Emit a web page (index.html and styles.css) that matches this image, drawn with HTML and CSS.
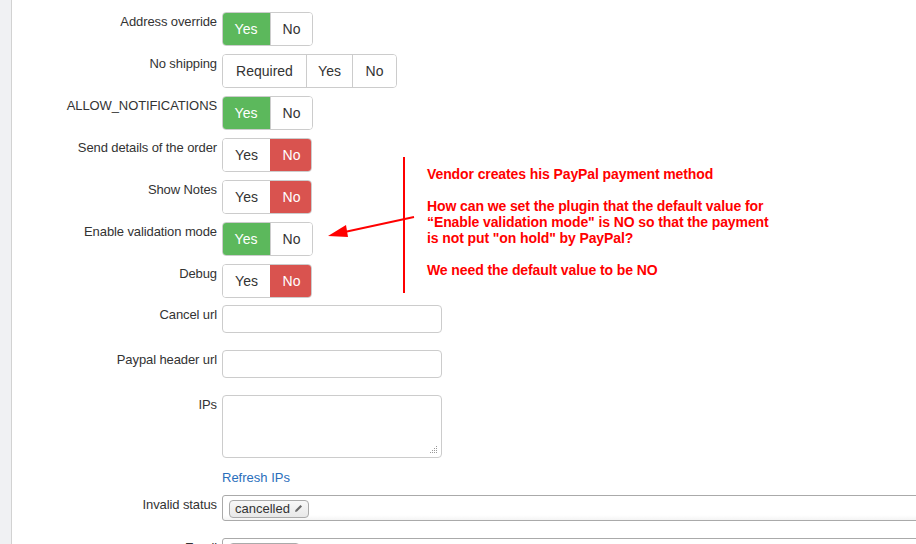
FILE: index.html
```html
<!DOCTYPE html>
<html>
<head>
<meta charset="utf-8">
<link rel="stylesheet" href="styles.css">
</head>
<body>
<div class="page">
  <aside class="side"></aside>
  <main class="main">
    <div class="row toggle-row">
      <label class="lbl">Address override</label>
      <div class="btn-group"><span class="btn yes on-green">Yes</span><span class="btn no">No</span></div>
    </div>
    <div class="row toggle-row">
      <label class="lbl">No shipping</label>
      <div class="btn-group"><span class="btn req">Required</span><span class="btn yes2">Yes</span><span class="btn no2">No</span></div>
    </div>
    <div class="row toggle-row">
      <label class="lbl">ALLOW_NOTIFICATIONS</label>
      <div class="btn-group"><span class="btn yes on-green">Yes</span><span class="btn no">No</span></div>
    </div>
    <div class="row toggle-row">
      <label class="lbl">Send details of the order</label>
      <div class="btn-group"><span class="btn yes">Yes</span><span class="btn no on-red">No</span></div>
    </div>
    <div class="row toggle-row">
      <label class="lbl">Show Notes</label>
      <div class="btn-group"><span class="btn yes">Yes</span><span class="btn no on-red">No</span></div>
    </div>
    <div class="row toggle-row">
      <label class="lbl">Enable validation mode</label>
      <div class="btn-group"><span class="btn yes on-green">Yes</span><span class="btn no">No</span></div>
    </div>
    <div class="row toggle-row last-toggle">
      <label class="lbl">Debug</label>
      <div class="btn-group"><span class="btn yes">Yes</span><span class="btn no on-red">No</span></div>
    </div>
    <div class="row input-row">
      <label class="lbl">Cancel url</label>
      <div class="input"></div>
    </div>
    <div class="row input-row">
      <label class="lbl">Paypal header url</label>
      <div class="input"></div>
    </div>
    <div class="row area-row">
      <label class="lbl">IPs</label>
      <div class="ctrl">
        <div class="textarea">
          <svg class="grip" width="8" height="8" viewBox="0 0 8 8"><g fill="#999"><rect x="6" y="0" width="1" height="1"/><rect x="4" y="2" width="1" height="1"/><rect x="6" y="2" width="1" height="1"/><rect x="2" y="4" width="1" height="1"/><rect x="4" y="4" width="1" height="1"/><rect x="6" y="4" width="1" height="1"/><rect x="0" y="6" width="1" height="1"/><rect x="2" y="6" width="1" height="1"/><rect x="4" y="6" width="1" height="1"/><rect x="6" y="6" width="1" height="1"/></g></svg>
        </div>
        <a class="link">Refresh IPs</a>
      </div>
    </div>
    <div class="row chosen-row">
      <label class="lbl">Invalid status</label>
      <div class="chosen"><span class="chip">cancelled <svg width="9" height="9" viewBox="0 0 9 9"><path d="M1 8 L1.5 6 L6.5 1 L8 2.5 L3 7.5 Z" fill="#666"/><path d="M1 8 L1.5 6 L3 7.5 Z" fill="#999"/></svg></span></div>
    </div>
    <div class="row chosen-row">
      <label class="lbl">Email</label>
      <div class="chosen"><span class="chip">pending <svg width="9" height="9" viewBox="0 0 9 9"><path d="M1 8 L1.5 6 L6.5 1 L8 2.5 L3 7.5 Z" fill="#666"/></svg></span></div>
    </div>
  </main>
  <div class="note">
    <p>Vendor creates his PayPal payment method</p>
    <p>How can we set the plugin that the default value for<br>“Enable validation mode" is NO so that the payment<br>is not put "on hold" by PayPal?</p>
    <p>We need the default value to be NO</p>
  </div>
  <svg class="arrow" width="90" height="30" viewBox="0 0 90 30">
    <line x1="88" y1="4" x2="14" y2="20" stroke="#f00" stroke-width="2"/>
    <polygon points="2,23 20,12 22,24" fill="#f00"/>
  </svg>
</div>
</body>
</html>
```
FILE: styles.css
```css
html, body {
  margin: 0;
  padding: 0;
  background: #fff;
  overflow: hidden;
  width: 916px;
  height: 544px;
}
.page {
  position: relative;
  display: flex;
  width: 916px;
  height: 544px;
  font-family: "Liberation Sans", Arial, sans-serif;
  color: #333;
}
.side {
  width: 11px;
  flex: none;
  background: #f0f1f3;
  border-right: 1px solid #d2d2d2;
}
.main {
  flex: 1;
  padding-top: 12px;
  min-width: 0;
}
.row {
  display: flex;
  gap: 5px;
}
.lbl {
  width: 205px;
  flex: none;
  text-align: right;
  font-size: 13px;
  line-height: 18px;
  padding-top: 1px;
  letter-spacing: -0.1px;
}
.toggle-row { margin-bottom: 8px; }
.last-toggle { margin-bottom: 7px; }
.btn-group {
  display: flex;
  height: 34px;
  border: 1px solid #ccc;
  border-radius: 4px;
  box-sizing: border-box;
  overflow: hidden;
}
.btn {
  display: flex;
  align-items: center;
  justify-content: center;
  font-size: 14px;
  color: #333;
  background: #fff;
  border-left: 1px solid #ccc;
  box-sizing: border-box;
}
.btn:first-child { border-left: none; }
.yes { width: 47px; }
.no { width: 42px; }
.req { width: 83px; }
.yes2 { width: 46px; }
.no2 { width: 44px; }
.on-green {
  background: #5cb85c;
  color: #fff;
  border-color: #5cb85c;
}
.on-red {
  background: #d9534f;
  color: #fff;
  border-color: #d9534f;
}
.btn-group .on-green:first-child, .btn-group .on-red { margin: -1px 0; height: 34px; }
.btn-group .on-red { margin-right: -1px; }
.btn-group .on-green:first-child { margin-left: -1px; width: 48px; }
.input-row { margin-bottom: 17px; }
.input-row .lbl { padding-top: 1px; }
.input {
  width: 220px;
  height: 28px;
  border: 1px solid #ccc;
  border-radius: 4px;
  box-sizing: border-box;
}
.area-row .lbl { padding-top: 1px; }
.ctrl { display: flex; flex-direction: column; }
.textarea {
  position: relative;
  width: 220px;
  height: 63px;
  border: 1px solid #ccc;
  border-radius: 4px;
  box-sizing: border-box;
}
.grip {
  position: absolute;
  right: 3px;
  bottom: 3px;
}
.link {
  color: #2a6ebb;
  font-size: 13px;
  line-height: 16px;
  margin-top: 12px;
  margin-bottom: 9px;
}
.chosen-row { margin-bottom: 17px; }
.chosen-row .lbl { padding-top: 1px; }
.chosen {
  width: 720px;
  height: 26px;
  flex: none;
  border: 1px solid #aaa;
  border-radius: 3px;
  box-sizing: border-box;
  background: linear-gradient(#fff 0%, #fff 80%, #f4f4f4 100%);
  padding: 3px 0 0 6px;
}
.chip {
  display: inline-flex;
  align-items: center;
  gap: 4px;
  height: 18px;
  box-sizing: border-box;
  padding: 0 5px;
  border: 1px solid #aaa;
  border-radius: 4px;
  background: linear-gradient(#f8f8f8, #e8e8e8);
  font-size: 13px;
  color: #333;
}
.note {
  position: absolute;
  left: 403px;
  top: 157px;
  height: 136px;
  border-left: 2px solid #f00;
  padding-left: 22px;
  color: #f00;
  font-size: 14px;
  line-height: 16px;
  font-weight: bold;
  letter-spacing: -0.1px;
  padding-top: 9px;
  box-sizing: border-box;
}
.note p { margin: 0 0 16px 0; white-space: nowrap; }
.arrow {
  position: absolute;
  left: 326px;
  top: 213px;
}
```
